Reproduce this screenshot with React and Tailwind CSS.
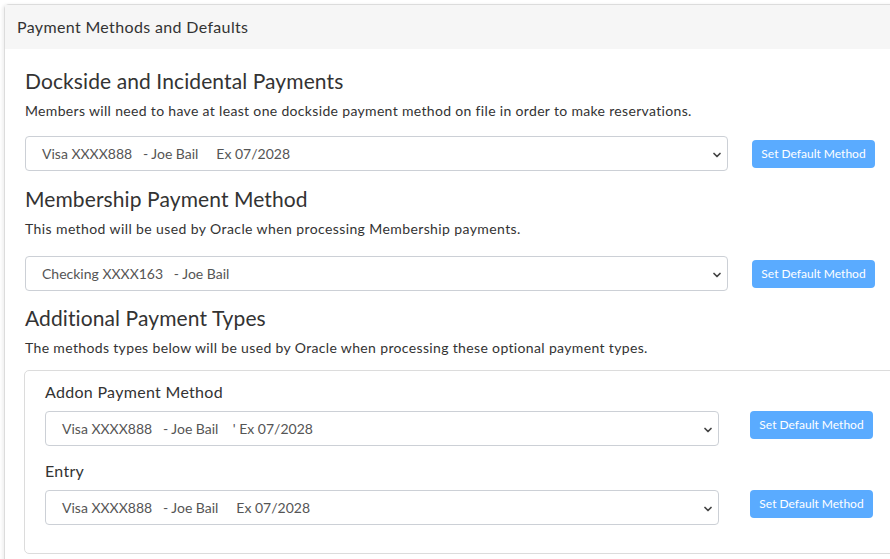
import { ChevronDown } from "lucide-react";

const font = { fontFamily: "Lato, 'Open Sans', sans-serif" };

function PaymentSelect({ value, width }) {
  return (
    <div
      className={`relative ${width} h-[35px] rounded border border-[#ccd0d6] bg-white flex items-center pl-4 pr-3 text-[14px] text-[#555] whitespace-pre`}
    >
      <span>{value}</span>
      <ChevronDown className="absolute right-[4px] top-[12px] h-3 w-3 text-[#444]" strokeWidth={3.5} />
    </div>
  );
}

function DefaultButton() {
  return (
    <button className="h-[28px] w-[123px] rounded-[4px] bg-[#5aabff] text-white text-[12px] flex items-center justify-center">
      Set Default Method
    </button>
  );
}

export default function App() {
  return (
    <div className="w-[890px] h-[559px] overflow-hidden bg-white pt-1 pl-1" style={font}>
      <div className="w-[920px] rounded-tl-[5px] border border-[#dcdcdc] shadow-[-2px_0_3px_rgba(0,0,0,0.06)] bg-white">
        {/* header */}
        <div className="h-[44px] bg-[#f6f6f6] px-3 flex items-center text-[16px] tracking-[0.35px] text-[#333]">
          Payment Methods and Defaults
        </div>

        <div className="pl-5 pt-[19px] pb-4 text-[#333]">
          <h2 className="text-[21px] leading-[26px] tracking-[0.1px]">Dockside and Incidental Payments</h2>
          <p className="mt-[7px] text-[14px] leading-[20px] tracking-[0.33px]">
            Members will need to have at least one dockside payment method on file in order to make reservations.
          </p>
          <div className="mt-[15px] flex items-center gap-6">
            <PaymentSelect width="w-[703px]" value={"Visa XXXX888   - Joe Bail     Ex 07/2028"} />
            <DefaultButton />
          </div>

          <h2 className="mt-[15px] text-[21px] leading-[26px] tracking-[0.1px]">Membership Payment Method</h2>
          <p className="mt-[7px] text-[14px] leading-[20px] tracking-[0.4px]">
            This method will be used by Oracle when processing Membership payments.
          </p>
          <div className="mt-[17px] flex items-center gap-6">
            <PaymentSelect width="w-[703px]" value={"Checking XXXX163   - Joe Bail"} />
            <DefaultButton />
          </div>

          <h2 className="mt-[14px] text-[21px] leading-[26px] tracking-[0.1px]">Additional Payment Types</h2>
          <p className="mt-[7px] text-[14px] leading-[20px] tracking-[0.35px]">
            The methods types below will be used by Oracle when processing these optional payment types.
          </p>

          <div className="mt-[12px] -ml-px rounded-l-[5px] border border-[#dcdcdc] pl-5 pt-[10px] pb-7">
            <div className="text-[16px] leading-[22px] tracking-[0.3px]">Addon Payment Method</div>
            <div className="mt-[8px] flex items-start gap-[31px]">
              <PaymentSelect width="w-[674px]" value={"Visa XXXX888   - Joe Bail    ' Ex 07/2028"} />
              <DefaultButton />
            </div>
            <div className="mt-[14px] text-[16px] leading-[22px] tracking-[0.3px]">Entry</div>
            <div className="mt-[8px] flex items-start gap-[31px]">
              <PaymentSelect width="w-[674px]" value={"Visa XXXX888   - Joe Bail     Ex 07/2028"} />
              <DefaultButton />
            </div>
          </div>
        </div>
      </div>
    </div>
  );
}
